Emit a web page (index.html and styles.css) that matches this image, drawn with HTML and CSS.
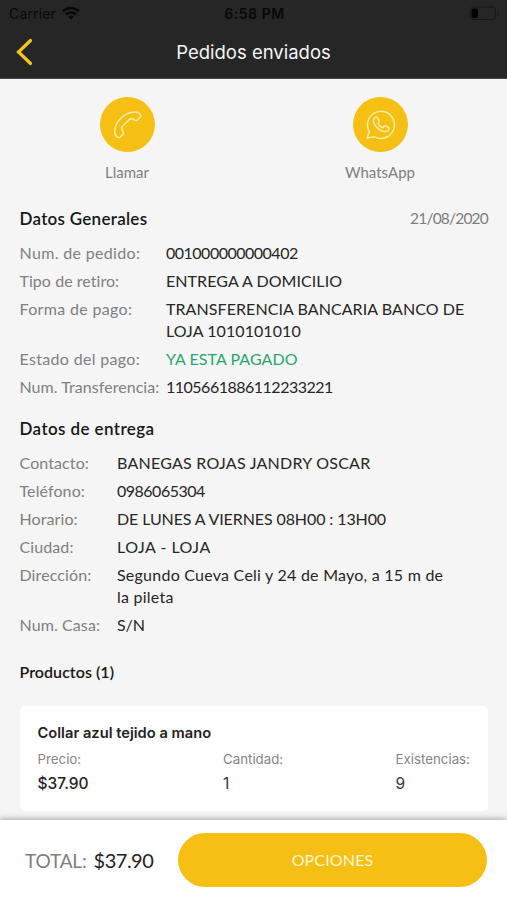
FILE: index.html
```html
<!DOCTYPE html>
<html lang="es">
<head>
<meta charset="utf-8">
<meta name="viewport" content="width=device-width, initial-scale=1">
<title>Pedidos enviados</title>
<link rel="stylesheet" href="styles.css">
</head>
<body>
<div class="app">
  <header class="header">
    <div class="status">
      <div class="carrier"><span>Carrier</span>
        <svg width="18" height="14" viewBox="0 0 18 14"><g fill="none" stroke="#080808" stroke-width="2.5"><path d="M1 5.2a11.5 11.5 0 0 1 16 0"/><path d="M4 8.5a7.2 7.2 0 0 1 10 0"/></g><path d="M9 13.6 6.2 10.8a4 4 0 0 1 5.6 0z" fill="#080808"/></svg>
      </div>
      <span class="clock">6:58 PM</span>
      <svg class="battery" width="31" height="15" viewBox="0 0 31 15"><rect x="1" y="1" width="25.500" height="12.500" rx="3.500" fill="none" stroke="#171717"/><rect x="2.500" y="2.500" width="6.500" height="9.500" rx="2" fill="#030303"/><path d="M28.500 5v4.500q2-2.200 0-4.500z" fill="#171717"/></svg>
    </div>
    <div class="navbar">
      <svg class="back" width="18" height="28" viewBox="0 0 18 28"><path d="M15.500 2.500 3.500 14l12 11.500" fill="none" stroke="#f6c41c" stroke-width="3.200" stroke-linecap="round"/></svg>
      <h1>Pedidos enviados</h1>
    </div>
  </header>
  <main class="content">
    <div class="actions">
      <div class="action">
        <div class="disc"><svg width="55" height="55" viewBox="0 0 55 55"><path d="M20.100 40.300C17.700 41.400 14.900 38.600 14.700 35.100 15 24.300 24.300 15.200 35 14.900 38.200 14.800 41.500 17.200 40.700 19.600L37.500 23Q36.600 23.900 34.900 23.100L31.700 21.800Q30.700 21.500 29.700 22.300L22.200 29.500Q21.300 30.500 21.600 31.500L23.300 35Q23.800 36.200 22.900 37.200Z"/></svg></div>
        <span class="llamar">Llamar</span>
      </div>
      <div class="action">
        <div class="disc"><svg width="55" height="55" viewBox="0 0 55 55"><path d="M14.200 40.900 16.300 34.700A13.500 13.500 0 1 1 21.600 39.800Z"/><path d="M22.600 20.100 24 20.200Q24.500 20.300 24.800 21L26 24Q26.200 24.500 25.700 25.200L24.900 26.300Q26.800 29.600 29.900 30.800L31.500 29.100Q32 28.700 32.700 29L35.500 30.400Q36.200 30.800 36.100 31.600C35.500 34.300 32.300 35.300 29.300 34.100 24.700 32.200 20.600 27.600 20.500 24 20.500 22.100 21.500 20.400 22.600 20.100Z"/></svg></div>
        <span class="whatsapp">WhatsApp</span>
      </div>
    </div>
    <section class="general">
      <div class="section-head"><h2>Datos Generales</h2><time>21/08/2020</time></div>
      <dl>
        <dt>Num. de pedido:</dt><dd class="digits">001000000000402</dd>
        <dt class="snug">Tipo de retiro:</dt><dd>ENTREGA A DOMICILIO</dd>
        <dt>Forma de pago:</dt><dd>TRANSFERENCIA BANCARIA BANCO DE<br>LOJA 1010101010</dd>
        <dt>Estado del pago:</dt><dd class="paid">YA ESTA PAGADO</dd>
        <dt class="snug">Num. Transferencia:</dt><dd class="digits">1105661886112233221</dd>
      </dl>
    </section>
    <section class="delivery">
      <div class="section-head"><h2>Datos de entrega</h2></div>
      <dl>
        <dt>Contacto:</dt><dd class="wide">BANEGAS ROJAS JANDRY OSCAR</dd>
        <dt>Teléfono:</dt><dd class="digits">0986065304</dd>
        <dt>Horario:</dt><dd class="hours">DE LUNES A VIERNES 08H00 : 13H00</dd>
        <dt>Ciudad:</dt><dd class="city">LOJA - LOJA</dd>
        <dt>Dirección:</dt><dd class="wide">Segundo Cueva Celi y 24 de Mayo, a 15 m de<br>la pileta</dd>
        <dt>Num. Casa:</dt><dd class="hours">S/N</dd>
      </dl>
    </section>
    <section class="products">
      <h2>Productos (1)</h2>
      <article class="card">
        <h3>Collar azul tejido a mano</h3>
        <div class="facts">
          <div><span>Precio:</span><strong>$37.90</strong></div>
          <div><span>Cantidad:</span><b>1</b></div>
          <div><span>Existencias:</span><b>9</b></div>
        </div>
      </article>
    </section>
  </main>
  <footer class="footer">
    <div class="total"><span>TOTAL:</span><strong>$37.90</strong></div>
    <button type="button">OPCIONES</button>
  </footer>
</div>
</body>
</html>
```

FILE: styles.css
```css
* { box-sizing: border-box; }
body { margin: 0; font-family: Lato, "Liberation Sans", sans-serif; font-variant-ligatures: none; color: #222; background: #f5f5f5; }
h1, h2, h3, dl, dd { margin: 0; }
svg { display: block; flex: none; }
.app { display: flex; flex-direction: column; height: 900px; overflow: hidden; }

.header { height: 79px; flex: none; background: #262626; border-bottom: 1px solid #484848; font-family: Inter, sans-serif; }
.status { display: grid; grid-template-columns: 1fr auto 1fr; align-items: center; height: 27px; padding: 0 7px 0 9px; color: #080808; font-size: 14px; }
.carrier { display: flex; align-items: center; gap: 6px; letter-spacing: .15px; }
.carrier svg { margin-top: -2px; }
.clock { font-weight: 600; letter-spacing: .55px; }
.battery { justify-self: end; }
.navbar { display: grid; grid-template-columns: 18px 1fr 18px; align-items: center; height: 50px; padding: 0 15px; }
.navbar h1 { color: #f5f5f5; font-size: 18.5px; font-weight: 400; text-align: center; }

.content { flex: 1; min-height: 0; padding: 18px 19px 0 19.5px; }
.actions { display: flex; justify-content: center; margin: 0 -19px 0 -19.5px; }
.action { display: flex; flex-direction: column; align-items: center; width: 253px; color: #808080; font-size: 15px; line-height: 20px; }
.disc { width: 55px; height: 55px; margin-bottom: 9.5px; border-radius: 50%; background: #f5c013; }
.disc path { fill: none; stroke: #ffeda8; stroke-width: 1.5; stroke-linejoin: round; }

.section-head { display: flex; justify-content: space-between; height: 24px; line-height: 24px; }
h2 { font-size: 17px; font-weight: 600; line-height: 24px; color: #171717; letter-spacing: .27px; }
time { color: #7d7d7d; font-size: 15.5px; letter-spacing: -.8px; line-height: 22px; }
.general { margin-top: 25px; }
dl { display: grid; grid-template-columns: 146.5px 1fr; row-gap: 6px; margin-top: 11.5px; font-size: 16px; line-height: 22px; }
dt { color: #808080; white-space: nowrap; letter-spacing: .33px; }
.snug { letter-spacing: .05px; }
dd { white-space: nowrap; color: #262626; letter-spacing: .07px; }
.digits { letter-spacing: -.5px; }
.wide { letter-spacing: .24px; }
.hours { letter-spacing: -.1px; }
.city { letter-spacing: .5px; }
.paid { color: #2aa56d; }
.delivery { margin-top: 18.5px; }
.delivery dl { grid-template-columns: 97.5px 1fr; margin-top: 11.5px; }
.delivery dt { letter-spacing: .1px; }
.delivery h2 { letter-spacing: .4px; }
.products { margin-top: 23.5px; }
.products h2 { font-size: 16px; letter-spacing: .05px; }

.card { margin-top: 22px; height: 105px; padding: 16px 18px; border-radius: 5px; background: #fff; font-family: Inter, sans-serif; }
.card h3 { font-size: 14.7px; font-weight: 600; line-height: 22px; color: #222; }
.facts { display: grid; grid-template-columns: 185.500px 172.500px auto; margin-top: 5px; white-space: nowrap; }
.facts div { display: flex; flex-direction: column; }
.facts span { color: #858585; font-size: 13.3px; line-height: 20px; }
.facts strong, .facts b { color: #222; font-size: 15.5px; font-weight: 500; line-height: 29px; }
.facts b { font-weight: 400; color: #333; }

.footer { display: flex; align-items: center; flex: none; height: 80px; padding: 0 20px 0 25px; background: #fff; box-shadow: 0 -1px 6px rgba(0, 0, 0, .35); position: relative; }
.total { display: flex; align-items: baseline; gap: 7px; width: 153px; padding-bottom: 1px; font-size: 19px; letter-spacing: -.15px; }
.total span { color: #808080; }
.total strong { font-weight: 400; color: #222; font-size: 20px; letter-spacing: -.5px; }
.footer button { flex: 1; height: 54px; padding: 0 0 2px; border: 0; border-radius: 27px; background: #f5c013; color: #fff6d9; font-family: inherit; font-size: 16px; letter-spacing: .15px; }
```
